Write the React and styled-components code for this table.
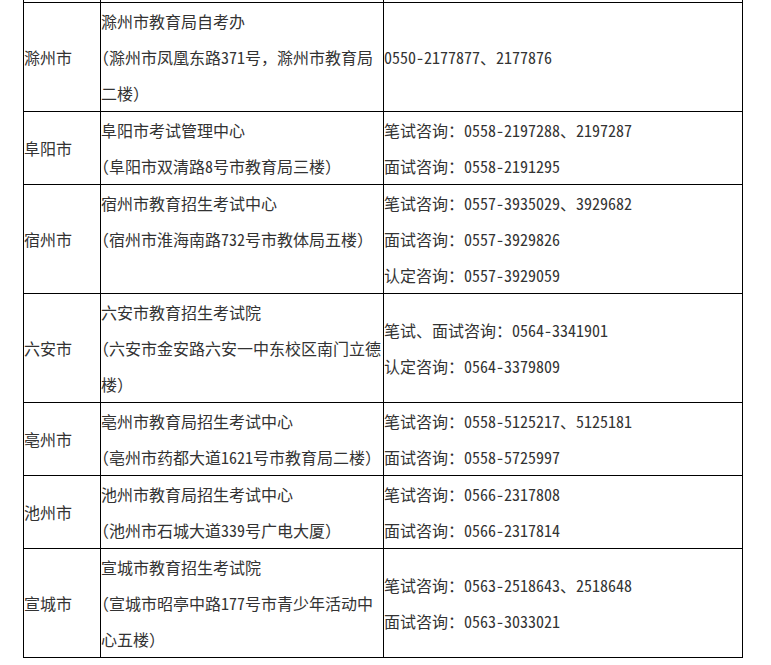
import React from "react";
import styled, { createGlobalStyle } from "styled-components";

const Global = createGlobalStyle`
  html, body { margin: 0; padding: 0; background: #fff; }
  body { font-family: "Noto Sans CJK SC", "Noto Sans", sans-serif; }
`;

const Page = styled.div`
  padding-left: 23px;
`;

const Table = styled.table`
  border-collapse: separate;
  border-spacing: 0;
  table-layout: fixed;
  width: 720px;
  border-left: 1px solid #000;
  color: #333;
  font-size: 16px;
  font-feature-settings: "hwid";
`;

const Cell = styled.td`
  padding: 0;
  border-right: 1px solid #000;
  border-bottom: 1px solid #000;
  vertical-align: ${(p) => (p.$top ? "top" : "middle")};
  line-height: 36px;
  height: ${(p) => (p.$h != null ? `${p.$h}px` : "auto")};
  box-sizing: content-box;
  overflow: visible;
`;

const Line = styled.div`
  white-space: nowrap;
  height: 36px;
`;

const Paren = styled.span`
  font-feature-settings: "halt";
`;

const FullPunct = styled.span`
  font-feature-settings: normal;
`;

const rows = [
  {
    city: "滁州市",
    office: ["滁州市教育局自考办", "（滁州市凤凰东路371号，滁州市教育局", "二楼）"],
    phones: ["0550-2177877、2177876"],
  },
  {
    city: "阜阳市",
    office: ["阜阳市考试管理中心", "（阜阳市双清路8号市教育局三楼）"],
    phones: ["笔试咨询：0558-2197288、2197287", "面试咨询：0558-2191295"],
  },
  {
    city: "宿州市",
    office: ["宿州市教育招生考试中心", "（宿州市淮海南路732号市教体局五楼）"],
    phones: [
      "笔试咨询：0557-3935029、3929682",
      "面试咨询：0557-3929826",
      "认定咨询：0557-3929059",
    ],
    h: 108,
  },
  {
    city: "六安市",
    office: ["六安市教育招生考试院", "（六安市金安路六安一中东校区南门立德", "楼）"],
    phones: ["笔试、面试咨询：0564-3341901", "认定咨询：0564-3379809"],
  },
  {
    city: "亳州市",
    office: ["亳州市教育局招生考试中心", "（亳州市药都大道1621号市教育局二楼）"],
    phones: ["笔试咨询：0558-5125217、5125181", "面试咨询：0558-5725997"],
  },
  {
    city: "池州市",
    office: ["池州市教育局招生考试中心", "（池州市石城大道339号广电大厦）"],
    phones: ["笔试咨询：0566-2317808", "面试咨询：0566-2317814"],
  },
  {
    city: "宣城市",
    office: ["宣城市教育招生考试院", "（宣城市昭亭中路177号市青少年活动中", "心五楼）"],
    phones: ["笔试咨询：0563-2518643、2518648", "面试咨询：0563-3033021"],
  },
];

function typeset(text) {
  const parts = text.split(/([（），：、])/);
  return parts.map((p, i) => {
    if (p === "（" || p === "）") return <Paren key={i}>{p}</Paren>;
    if (p === "，" || p === "：" || p === "、") return <FullPunct key={i}>{p}</FullPunct>;
    return <React.Fragment key={i}>{p}</React.Fragment>;
  });
}

export default function App() {
  return (
    <Page>
      <Global />
      <Table>
        <colgroup>
          <col style={{ width: 77 }} />
          <col style={{ width: 283 }} />
          <col style={{ width: 359 }} />
        </colgroup>
        <tbody>
          <tr>
            <Cell $h={2} />
            <Cell $h={2} />
            <Cell $h={2} />
          </tr>
          {rows.map((r) => (
            <tr key={r.city}>
              <Cell>{r.city}</Cell>
              <Cell $top $h={r.h}>
                {r.office.map((l, i) => (
                  <Line key={i}>{typeset(l)}</Line>
                ))}
              </Cell>
              <Cell>
                {r.phones.map((l, i) => (
                  <Line key={i}>{typeset(l)}</Line>
                ))}
              </Cell>
            </tr>
          ))}
        </tbody>
      </Table>
    </Page>
  );
}
